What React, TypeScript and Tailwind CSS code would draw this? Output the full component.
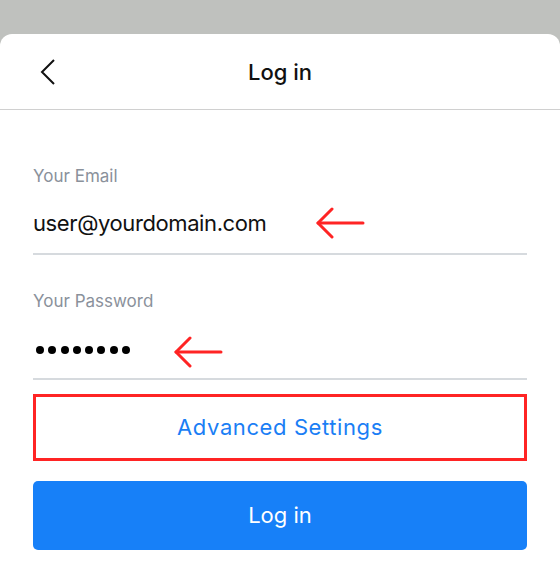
import { FC } from "react";

const Arrow: FC<{ className?: string }> = ({ className }) => (
  <svg
    width="50"
    height="32"
    viewBox="0 0 50 32"
    fill="none"
    stroke="#ff2424"
    strokeWidth="3"
    strokeLinecap="round"
    strokeLinejoin="round"
    className={className}
  >
    <path d="M2 16 H47" />
    <path d="M16 2 L2 16 L16 30" />
  </svg>
);

const App: FC = () => {
  return (
    <div className="w-[560px] h-[588px] bg-[#bfc1be] pt-[34px] overflow-hidden font-['Inter',sans-serif]">
      <div className="h-full bg-white rounded-t-[12px]">
        {/* header */}
        <div className="relative flex items-center justify-center h-[76px] border-b border-[#d0d0d0]">
          <svg
            width="16"
            height="26"
            viewBox="0 0 16 26"
            fill="none"
            stroke="#111"
            strokeWidth="2"
            className="absolute left-[40px] top-[25px]"
          >
            <path d="M14 1 L2 13 L14 25" />
          </svg>
          <h1 className="text-[22px] leading-[28px] font-medium text-[#111]">Log in</h1>
        </div>

        <div className="px-[33px]">
          {/* email */}
          <div className="pt-[56px]">
            <label className="block text-[17px] leading-[20px] text-[#8a919b]">Your Email</label>
            <div className="relative mt-[23px] pb-[16px] border-b-2 border-[#d6dade]">
              <div className="text-[22px] leading-[28px] tracking-[-0.4px] text-[#111]">user@yourdomain.com</div>
              <Arrow className="absolute left-[283px] top-[-2px]" />
            </div>
          </div>

          {/* password */}
          <div className="pt-[36px]">
            <label className="block text-[17px] leading-[20px] text-[#8a919b]">Your Password</label>
            <div className="relative mt-[23px] pb-[16px] border-b-2 border-[#d6dade]">
              <div className="flex items-center gap-[4.3px] h-[28px] pt-1 pl-[3px]">
                {[0, 1, 2, 3, 4, 5, 6, 7].map((i) => (
                  <span key={i} className="w-[8px] h-[8px] rounded-full bg-black" />
                ))}
              </div>
              <Arrow className="absolute left-[141px] top-[2px]" />
            </div>
          </div>

          {/* advanced */}
          <button className="mt-[14px] w-full h-[67px] border-[3px] border-[#ff2424] flex items-center justify-center text-[22px] tracking-[0.6px] text-[#1a7ef5]">
            Advanced Settings
          </button>

          <button className="mt-[20px] w-full h-[69px] rounded-[5px] bg-[#1780f8] flex items-center justify-center text-[22px] text-white">
            Log in
          </button>
        </div>
      </div>
    </div>
  );
};

export default App;
